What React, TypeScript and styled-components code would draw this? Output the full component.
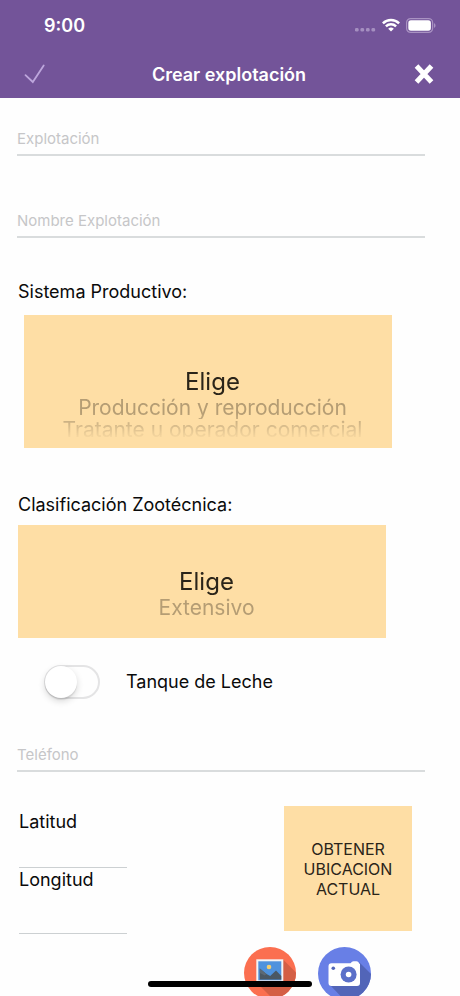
import React, { useState } from "react";
import styled, { createGlobalStyle } from "styled-components";

const GlobalStyle = createGlobalStyle`
  *, *::before, *::after { box-sizing: border-box; }
  body { margin: 0; background: #fefefe; }
  body, button, input, select { font-family: Inter, "Liberation Sans", sans-serif; }
`;

const Screen = styled.div`
  display: flex;
  flex-direction: column;
  height: 100vh;
  overflow: hidden;
  color: #0a0a0a;
`;

const Header = styled.header`
  flex: none;
  background: #735499;
  color: #fff;
`;

const StatusBar = styled.div`
  display: flex;
  align-items: center;
  justify-content: space-between;
  height: 50px;
  padding: 0 24px 0 44px;
`;

const Clock = styled.time`
  font-size: 18px;
  font-weight: 600;
`;

const StatusIcons = styled.div`
  display: flex;
  align-items: center;
  gap: 6px;
`;

const NavBar = styled.div`
  display: flex;
  align-items: center;
  justify-content: space-between;
  height: 48px;
  padding: 0 24px;
`;

const Title = styled.h1`
  margin: 0;
  font-size: 18px;
  font-weight: 600;
`;

const IconButton = styled.button`
  display: flex;
  padding: 0;
  border: 0;
  background: none;
  color: inherit;
  cursor: pointer;
`;

const Form = styled.form`
  flex: 1;
  min-height: 0;
  overflow-y: auto;
  scrollbar-width: none;
  padding-top: 24px;
`;

const TextInput = styled.input`
  display: block;
  width: 100%;
  height: 34px;
  padding: 0;
  border: 0;
  border-bottom: 2px solid #d9dcdd;
  border-radius: 0;
  outline: 0;
  background: none;
  color: #0a0a0a;
  font-size: 15px;
  &::placeholder { color: #c6c6c8; opacity: 1; }
`;

const Field = styled.div<{ $gap: number }>`
  margin: 0 35px ${(p) => p.$gap}px 17px;
`;

const Label = styled.label`
  display: block;
  font-size: 18px;
  line-height: 24px;
`;

const PickerLabel = styled(Label)`
  margin: 0 18px;
`;

const PickerBox = styled.div<{ $inset: number; $height: number; $above: number; $below: number }>`
  width: 80%;
  height: ${(p) => p.$height}px;
  margin: ${(p) => p.$above}px 0 ${(p) => p.$below}px ${(p) => p.$inset}px;
  background: #fedea5;
`;

const Wheel = styled.select<{ $top: number }>`
  display: block;
  width: 100%;
  height: 100%;
  padding: ${(p) => p.$top}px 0 0 9px;
  border: 0;
  outline: 0;
  overflow: hidden;
  background: none;
  scrollbar-width: none;
  text-align: center;
  mask-image: linear-gradient(#000 98px, transparent 125px);
`;

const WheelOption = styled.option`
  height: 24px;
  min-height: 24px;
  padding: 0;
  overflow: hidden;
  color: #b59d74;
  font-size: 21px;
  text-align: center;

  &:checked {
    height: 28px;
    background: #fedea5 linear-gradient(#fedea5, #fedea5);
    color: #2a2419;
    font-size: 24px;
  }
`;

const FarOption = styled(WheelOption)`
  height: 20px;
  min-height: 20px;
  margin-top: -2px;
`;

const SwitchRow = styled.label`
  display: flex;
  align-items: center;
  gap: 26px;
  width: fit-content;
  margin: 0 0 39px 44px;
  font-size: 18px;
  line-height: 34px;
`;

const Switch = styled.input`
  flex: none;
  appearance: none;
  display: flex;
  width: 56px;
  height: 34px;
  margin: 0;
  border: 2px solid #e4e4e5;
  border-radius: 17px;
  background: #fefefe;
  cursor: pointer;

  &::before {
    content: "";
    width: 32px;
    height: 32px;
    margin: -1px;
    border-radius: 50%;
    background: #fff;
    box-shadow: 0 3px 7px rgba(0, 0, 0, 0.16), 0 2px 1px rgba(0, 0, 0, 0.08);
  }

  &:checked { background: #735499; justify-content: flex-end; }
`;

const Location = styled.section`
  display: flex;
  align-items: flex-start;
  justify-content: space-between;
  margin: 0 48px 13px 19px;
`;

const Coordinates = styled.div`
  width: 108px;
  padding-top: 4px;
`;

const CoordinateInput = styled(TextInput)<{ $height: number }>`
  height: ${(p) => p.$height}px;
  border-bottom-width: 1px;
  border-color: #ccd0d2;
`;

const LocateButton = styled.button`
  width: 128px;
  height: 125px;
  padding: 0 16px;
  border: 0;
  background: #fedea5;
  color: #2a2419;
  font-size: 16px;
  line-height: 20px;
  cursor: pointer;
`;

const PhotoActions = styled.div`
  display: flex;
  justify-content: flex-end;
  gap: 22px;
  margin-right: 89px;
`;

const HomeIndicator = styled.div`
  position: fixed;
  left: 50%;
  bottom: 9px;
  width: 164px;
  height: 6px;
  margin-left: -82px;
  border-radius: 3px;
  background: #000;
`;

const SignalDots = () => (
  <svg width="22" height="18" viewBox="0 0 22 18" fill="#a58fc0" aria-hidden="true">
    <rect x="1" y="12" width="3.600" height="3.600" rx="1.300" />
    <rect x="6.500" y="12" width="3.600" height="3.600" rx="1.300" />
    <rect x="12" y="12" width="3.600" height="3.600" rx="1.300" />
    <rect x="17.500" y="12" width="3.600" height="3.600" rx="1.300" />
  </svg>
);

const WifiIcon = () => (
  <svg width="18" height="14" viewBox="0 0 18 14" aria-hidden="true">
    <g fill="none" stroke="#fff" strokeWidth="2.500">
      <path d="M.9 5.300a11.600 11.600 0 0 1 16.200 0" />
      <path d="M3.900 8.400a7.300 7.300 0 0 1 10.200 0" />
    </g>
    <path d="M9 13.600 6.200 10.800a4 4 0 0 1 5.600 0z" fill="#fff" />
  </svg>
);

const BatteryIcon = () => (
  <svg width="30" height="15" viewBox="0 0 30 15" aria-hidden="true">
    <rect x=".6" y=".6" width="26" height="13.800" rx="4" fill="none" stroke="#a992c2" strokeWidth="1.200" />
    <rect x="2.300" y="2.300" width="22.600" height="10.400" rx="2.600" fill="#fff" />
    <path d="M28 5.200c2 .7 2 3.900 0 4.600z" fill="#a992c2" />
  </svg>
);

const CheckIcon = () => (
  <svg width="22" height="20" viewBox="0 0 22 20" fill="none" stroke="#bda6dc" strokeWidth="1.800" aria-hidden="true">
    <path d="M1.500 11.200 8.800 18 19.700 1.500" strokeLinecap="round" />
  </svg>
);

const CloseIcon = () => (
  <svg width="24" height="20" viewBox="0 0 24 20" stroke="#fff" strokeWidth="5" aria-hidden="true">
    <path d="M4.500 2 19.500 18M19.500 2 4.500 18" />
  </svg>
);

const GalleryIcon = () => (
  <svg width="52" height="52" viewBox="0 0 52 52" aria-hidden="true">
    <defs>
      <clipPath id="gallery-disc"><circle cx="26" cy="26" r="26" /></clipPath>
    </defs>
    <g clipPath="url(#gallery-disc)">
      <rect width="52" height="52" fill="#fb6f50" />
      <path d="M39 12.500 58 31.500V58H35L12.500 35.500z" fill="#d45f45" />
      <rect x="12.300" y="12.300" width="27" height="23" fill="#f4f3f4" />
      <rect x="14.300" y="14.300" width="23" height="19" fill="#4f92dd" />
      <circle cx="25" cy="20" r="2.300" fill="#f3cf70" />
      <path d="M15.800 21.500 22.500 27 26.200 29 32 23.500 37.300 29V32.500H15.800z" fill="#4a5763" />
      <path d="M15.800 21.500 22.500 27 20.800 28.500 15.800 26z" fill="#5c6975" />
    </g>
  </svg>
);

const CameraIcon = () => (
  <svg width="53" height="53" viewBox="0 0 53 53" aria-hidden="true">
    <defs>
      <clipPath id="camera-disc"><circle cx="26.500" cy="26.500" r="26.500" /></clipPath>
    </defs>
    <g clipPath="url(#camera-disc)">
      <rect width="53" height="53" fill="#687fe6" />
      <path d="M41.500 15.500 60 34V60H33L12 38z" fill="#5265b8" />
      <path d="M13.500 16.300H32.500L34 14.700Q34.600 14.200 35.500 14.200H38.500Q39.600 14.200 40.200 15L42 17.300V36Q42 39 39 39H13.500Q10.500 39 10.500 36V19.300Q10.500 16.300 13.500 16.300z" fill="#fff" />
      <circle cx="15.300" cy="21.300" r="1.800" fill="#5265b8" />
      <circle cx="30.600" cy="27.500" r="8" fill="#5b70c9" />
      <circle cx="30.600" cy="27.500" r="2.800" fill="#fff" />
    </g>
  </svg>
);

export default function App() {
  const [tank, setTank] = useState(false);

  return (
    <>
      <GlobalStyle />
      <Screen>
        <Header>
          <StatusBar>
            <Clock>9:00</Clock>
            <StatusIcons>
              <SignalDots />
              <WifiIcon />
              <BatteryIcon />
            </StatusIcons>
          </StatusBar>
          <NavBar>
            <IconButton type="submit" form="farm-form" aria-label="Guardar"><CheckIcon /></IconButton>
            <Title>Crear explotación</Title>
            <IconButton type="button" aria-label="Cerrar"><CloseIcon /></IconButton>
          </NavBar>
        </Header>

        <Form id="farm-form" onSubmit={(e) => e.preventDefault()}>
          <Field $gap={48}>
            <TextInput aria-label="Explotación" placeholder="Explotación" />
          </Field>
          <Field $gap={42}>
            <TextInput aria-label="Nombre Explotación" placeholder="Nombre Explotación" />
          </Field>

          <PickerLabel htmlFor="system">Sistema Productivo:</PickerLabel>
          <PickerBox $inset={24} $height={133} $above={11} $below={45}>
            <Wheel id="system" size={3} defaultValue="none" $top={52}>
              <WheelOption value="none">Elige</WheelOption>
              <WheelOption value="production">Producción y reproducción</WheelOption>
              <FarOption value="dealer">Tratante u operador comercial</FarOption>
            </Wheel>
          </PickerBox>

          <PickerLabel htmlFor="classification">Clasificación Zootécnica:</PickerLabel>
          <PickerBox $inset={18} $height={113} $above={8} $below={27}>
            <Wheel id="classification" size={2} defaultValue="none" $top={42}>
              <WheelOption value="none">Elige</WheelOption>
              <WheelOption value="extensive">Extensivo</WheelOption>
            </Wheel>
          </PickerBox>

          <SwitchRow>
            <Switch type="checkbox" role="switch" checked={tank} onChange={(e) => setTank(e.target.checked)} />
            Tanque de Leche
          </SwitchRow>

          <Field $gap={34}>
            <TextInput type="tel" aria-label="Teléfono" placeholder="Teléfono" />
          </Field>

          <Location>
            <Coordinates>
              <Label htmlFor="latitude">Latitud</Label>
              <CoordinateInput id="latitude" $height={34} />
              <Label htmlFor="longitude">Longitud</Label>
              <CoordinateInput id="longitude" $height={42} />
            </Coordinates>
            <LocateButton type="button">OBTENER UBICACION ACTUAL</LocateButton>
          </Location>

          <PhotoActions>
            <IconButton type="button" aria-label="Galería"><GalleryIcon /></IconButton>
            <IconButton type="button" aria-label="Cámara"><CameraIcon /></IconButton>
          </PhotoActions>
        </Form>
        <HomeIndicator />
      </Screen>
    </>
  );
}
